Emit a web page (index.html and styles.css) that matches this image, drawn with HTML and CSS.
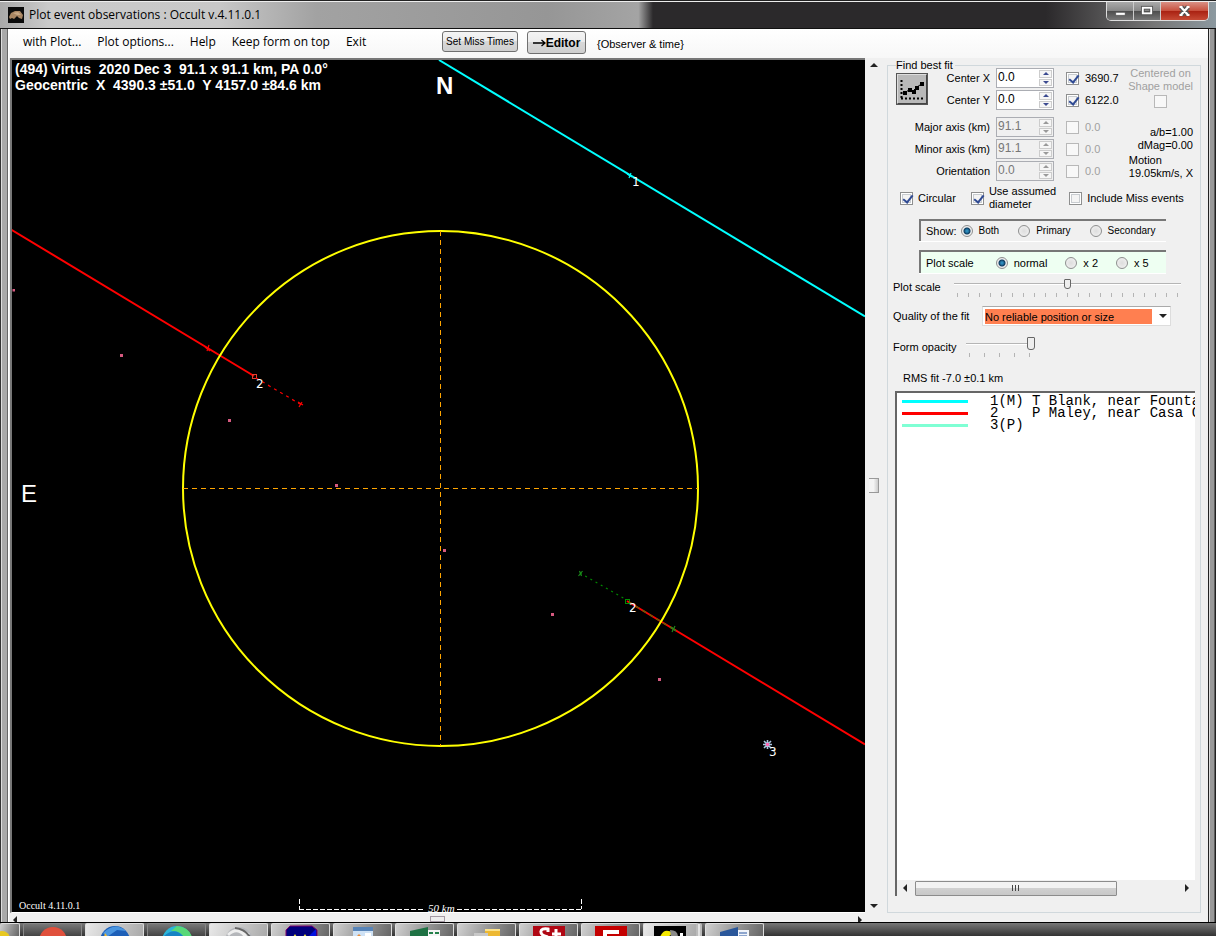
FILE: index.html
```html
<!DOCTYPE html>
<html lang="en">
<head>
<meta charset="utf-8">
<title>Plot event observations : Occult v.4.11.0.1</title>
<link rel="stylesheet" href="styles.css">
</head>
<body>
<div class="window">
  <header class="titlebar">
    <svg class="app-icon" viewBox="0 0 16 16" aria-hidden="true"><rect width="16" height="16" fill="#0c0c0c"/><path d="M1 10 3 6 7 4l5 0 3 4-1 4-3-1-2-2-3 3-2-1-2 1z" fill="#a98662"/><path d="M5 6l5-1 3 3-4 0z" fill="#c9a985"/></svg>
    <h1 class="title">Plot event observations : Occult v.4.11.0.1</h1>
    <div class="window-buttons">
      <button class="wb" aria-label="Minimize"><svg viewBox="0 0 28 18"><rect x="9.500" y="10.500" width="10" height="3" fill="#fff" stroke="#555"  stroke-width=".6"/></svg></button>
      <button class="wb" aria-label="Maximize"><svg viewBox="0 0 28 18"><rect x="9.500" y="5.500" width="9" height="6" fill="none" stroke="#555" stroke-width="4"/><rect x="9.500" y="5.500" width="9" height="6" fill="none" stroke="#fff" stroke-width="2"/></svg></button>
      <button class="wb close" aria-label="Close"><svg viewBox="0 0 46 18"><path d="M19.500 5l7 8m0-8-7 8" stroke="#555" stroke-width="5"/><path d="M19.500 5l7 8m0-8-7 8M18 5h3m4 0h3M18 13h3m4 0h3" stroke="#fff" stroke-width="2.200"/></svg></button>
    </div>
  </header>

  <div class="client">
    <nav class="menubar">
      <button class="menu">with Plot...</button>
      <button class="menu">Plot options...</button>
      <button class="menu">Help</button>
      <button class="menu">Keep form on top</button>
      <button class="menu">Exit</button>
      <button class="push small">Set Miss Times</button>
      <button class="push editor"><svg viewBox="0 0 13 8"><path d="M0 4h12M8.500 1 12 4 8.500 7" fill="none" stroke="#000" stroke-width="1.300"/></svg>Editor</button>
      <span class="hint">{Observer &amp; time}</span>
    </nav>

    <div class="workspace">
      <div class="plot-column">
        <div class="plot">
          <svg viewBox="12 60 853 852" preserveAspectRatio="xMinYMin meet">
            <g fill="none" stroke-width="2">
              <path d="M439 60 865 316.500" stroke="#0ff"/>
              <path d="M11 229.500 254 376M627 601 865 744.500" stroke="#f00"/>
              <circle cx="440.500" cy="488.500" r="257.500" stroke="#ff0"/>
            </g>
            <path class="crosshair" d="M183 488.500H698M440.500 231V746"/>
            <g fill="none" stroke-width="1" shape-rendering="crispEdges">
              <path d="M299.500 899v10M581.500 899v10M299 909.500H424M457 909.500H582" stroke="#fff" stroke-dasharray="5 2"/>
              <rect x="252.500" y="374.500" width="4" height="4" stroke="#e04030"/>
              <rect x="625.500" y="599.500" width="4" height="4" stroke="#009000"/>
            </g>
            <g fill="none" stroke-width="1.200">
              <path d="M256 378 300 404" stroke="#f00" stroke-dasharray="3 4"/>
              <path d="M298 402l5 3m-4 2 3-5M205 347l5 4m-3 0 2-6" stroke="#f00"/>
              <path d="M580 573 625 599" stroke="#080" stroke-dasharray="2 4"/>
              <path d="M629 602 673 629" stroke="#557000" stroke-dasharray="4 4"/>
              <path d="M578.500 576l4-5m-3 0 2 5M671 627l5 4m-4 1 3-6" stroke="#1b8c1b"/>
              <path d="M627 174l5 3m-3 1 2-5" stroke="#0ff"/>
              <path d="M764 741l7 7m0-7-7 7M767.500 740v9M763 744.500h9" stroke="#aac4e0" stroke-width="1.600"/>
            </g>
            <g fill="#d65a80">
              <rect x="12.500" y="289" width="2.500" height="2.500"/><rect x="120" y="354" width="3" height="3"/><rect x="228" y="419" width="3" height="3"/><rect x="335" y="484" width="3" height="3"/><rect x="443" y="549" width="3" height="3"/><rect x="551" y="613" width="3" height="3"/><rect x="658" y="678" width="3" height="3"/><rect x="766" y="743" width="3" height="3" fill="#ff69b4"/>
            </g>
            <g class="plot-head"><text x="15" y="74">(494) Virtus&nbsp; 2020 Dec 3&nbsp;&nbsp;91.1 x 91.1 km, PA 0.0°</text><text x="15" y="90">Geocentric&nbsp; X&nbsp; 4390.3 ±51.0&nbsp; Y 4157.0 ±84.6 km</text></g>
            <text class="compass" x="436" y="94">N</text>
            <text class="compass east" x="21" y="502">E</text>
            <g class="chord"><text x="632" y="186">1</text><text x="256" y="388">2</text><text x="629" y="612">2</text><text x="769" y="756">3</text></g>
            <text class="version" x="19" y="909">Occult 4.11.0.1</text>
            <text class="scale" x="428" y="912">50 km</text>
          </svg>
        </div>
        <div class="hscroll-outer"><i class="arrow left"></i><i class="h-thumb"></i><i class="arrow right"></i></div>
      </div>
      <div class="vscroll"><i class="arrow up"></i><i class="v-thumb"></i><i class="arrow down"></i></div>

      <fieldset class="panel">
        <legend>Find best fit</legend>
        <div class="fit">
          <button class="fit-button" aria-label="Find best fit"><svg viewBox="0 0 28 27"><path d="M3.500 4v19" stroke="#000" stroke-width="2" stroke-dasharray="2 2"/><path d="M3 22.500h22" stroke="#000" stroke-width="2" stroke-dasharray="2 2"/><path d="M6 17l5-3 4 1 4-4 6-4" fill="none" stroke="#000"/><path d="M5 15h4v4H5zM10 12h4v4h-4zM14 14h4v4h-4zM17 10h4v4h-4zM22 6h4v4h-4z"/></svg></button>
          <label for="cx">Center X</label>
          <span class="spin"><input id="cx" value="0.0"><span class="steps"><button aria-label="Increase Center X"></button><button class="dn" aria-label="Decrease Center X"></button></span></span>
          <input type="checkbox" id="fx" checked><label class="val" for="fx">3690.7</label>
          <label class="centered" for="shape">Centered on<br>Shape model<input type="checkbox" id="shape" disabled></label>
          <label for="cy">Center Y</label>
          <span class="spin"><input id="cy" value="0.0"><span class="steps"><button aria-label="Increase Center Y"></button><button class="dn" aria-label="Decrease Center Y"></button></span></span>
          <input type="checkbox" id="fy" checked><label class="val" for="fy">6122.0</label>
        </div>
        <div class="fit axes">
          <label class="wide" for="ma">Major axis (km)</label>
          <span class="spin"><input id="ma" value="91.1" disabled><span class="steps"><button disabled aria-label="Increase Major axis"></button><button class="dn" disabled aria-label="Decrease Major axis"></button></span></span>
          <input type="checkbox" id="fma" disabled><label class="val off" for="fma">0.0</label>
          <div class="motion"><p class="right">a/b=1.00<br>dMag=0.00</p><p>Motion<br>19.05km/s, X</p></div>
          <label class="wide" for="mi">Minor axis (km)</label>
          <span class="spin"><input id="mi" value="91.1" disabled><span class="steps"><button disabled aria-label="Increase Minor axis"></button><button class="dn" disabled aria-label="Decrease Minor axis"></button></span></span>
          <input type="checkbox" id="fmi" disabled><label class="val off" for="fmi">0.0</label>
          <label class="wide" for="or">Orientation</label>
          <span class="spin"><input id="or" value="0.0" disabled><span class="steps"><button disabled aria-label="Increase Orientation"></button><button class="dn" disabled aria-label="Decrease Orientation"></button></span></span>
          <input type="checkbox" id="for" disabled><label class="val off" for="for">0.0</label>
        </div>
        <div class="checks">
          <label><input type="checkbox" checked>Circular</label>
          <label class="assumed"><input type="checkbox" checked><span>Use assumed<br>diameter</span></label>
          <label><input type="checkbox">Include Miss events</label>
        </div>
        <div class="box show" role="radiogroup" aria-label="Show">
          <span>Show:</span>
          <label><input type="radio" name="show" checked>Both</label>
          <label><input type="radio" name="show">Primary</label>
          <label><input type="radio" name="show">Secondary</label>
        </div>
        <div class="box zoom" role="radiogroup" aria-label="Plot scale">
          <span>Plot scale</span>
          <label><input type="radio" name="zoom" checked>normal</label>
          <label><input type="radio" name="zoom">x 2</label>
          <label><input type="radio" name="zoom">x 5</label>
        </div>
        <div class="line scale-line"><label for="ps">Plot scale</label><span class="slider"><input type="range" id="ps" min="0" max="20" value="10"><i class="ticks"></i></span></div>
        <div class="line quality-line"><label for="q">Quality of the fit</label><span class="combo"><select id="q"><option>No reliable position or size</option></select><i class="arrow down"></i></span></div>
        <div class="line opacity-line"><label for="op">Form opacity</label><span class="slider"><input type="range" id="op" min="0" max="100" value="100"><i class="ticks"></i></span></div>
        <p class="rms">RMS fit -7.0 ±0.1 km</p>
        <div class="list">
          <ul class="rows">
            <li><i class="swatch cyan"></i>1(M) T Blank, near Founta</li>
            <li><i class="swatch red"></i>2&nbsp;&nbsp;&nbsp; P Maley, near Casa G</li>
            <li><i class="swatch aqua"></i>3(P)</li>
          </ul>
          <div class="hscroll"><i class="arrow left"></i><span class="track"><i class="thumb"></i></span><i class="arrow right"></i></div>
        </div>
      </fieldset>
    </div>
  </div>
</div>

<footer class="taskbar">
  <span class="task first"><svg viewBox="0 0 40 14"><circle cx="12" cy="16" r="8" fill="#e8c820"/></svg></span>
  <span class="task flat"><svg viewBox="0 0 40 14"><circle cx="20" cy="18" r="14" fill="#e0503c"/></svg></span>
  <span class="task lit"><svg viewBox="0 0 40 14"><circle cx="20" cy="18" r="15" fill="#1d5fb8"/><path d="M8 10Q20-2 31 8L22 7 12 14z" fill="#4b96e0"/><path d="M10 10l3 4H9z" fill="#f0b830"/></svg></span>
  <span class="task flat"><svg viewBox="0 0 40 14"><circle cx="20" cy="18" r="15" fill="#2bb5d8"/><path d="M20 3Q32 4 35 14H26Q24 8 14 8z" fill="#58d878"/><path d="M7 13Q18 3 27 14H7z" fill="#1683c4"/></svg></span>
  <span class="task lit"><svg viewBox="0 0 40 14"><circle cx="20" cy="18" r="14" fill="#b5b7bb"/><path d="M8 11Q18 1 31 11L25 14Q18 5 10 13z" fill="#eee"/><path d="M16 5q10 1 15 9" fill="none" stroke="#666" stroke-width="2"/></svg></span>
  <span class="task"><svg viewBox="0 0 40 14"><path d="M5 14V7l4-4h22l5 4v7z" fill="#00007c" stroke="#80006a"/><path d="M12 14l2-3 2 3m6 0 2-3 2 3" fill="#e8e030"/><path d="M27 14l8-8v8z" fill="#0010e0"/></svg></span>
  <span class="task"><svg viewBox="0 0 40 14"><path d="M10 4h20v10H10z" fill="#cfe2f5"/><path d="M10 4h20v4H10z" fill="#5784b8"/><path d="M13 14l3-3 3 3z" fill="#e68b38"/><path d="M22 10h6v4h-6z" fill="#fff"/></svg></span>
  <span class="task"><svg viewBox="0 0 40 14"><path d="M21 7h14v7H21z" fill="#f4f4f4"/><path d="M24 9h4v2h-4zm6 0h4v2h-4zm-6 4h4v1h-4zm6 0h4v1h-4z" fill="#23804a"/><path d="M5 8l18-4v10H5z" fill="#1f7244"/></svg></span>
  <span class="task"><svg viewBox="0 0 40 14"><path d="M18 6h15v8H18z" fill="#edb832"/><path d="M18 6h15v2H18z" fill="#fbe28c"/><path d="M7 10h14v4H7z" fill="#c8c8c8"/></svg></span>
  <span class="task"><svg viewBox="0 0 40 14"><path d="M4 3h32v11H4z" fill="#b00814"/><path d="M19 14c-10-2-9-10 0-8v3M27 6v8M23 11h9" fill="none" stroke="#fff" stroke-width="3"/></svg></span>
  <span class="task"><svg viewBox="0 0 40 14"><path d="M4 3h32v11H4z" fill="#c40000"/><path d="M14 14V9h14" fill="none" stroke="#fff" stroke-width="4"/></svg></span>
  <span class="task lit stack"><svg viewBox="0 0 40 14"><path d="M4 3h32v11H4z" fill="#000"/><path d="M10 14q4-10 13-4l-5 4z" fill="#f4e800"/><path d="M20 7q8 0 8 7h-7z" fill="#8a8a8a"/><path d="M30 10h3v4h-3z" fill="#fff"/></svg></span>
  <span class="task"><svg viewBox="0 0 40 14"><path d="M20 7h14v7H20z" fill="#f0f4fa"/><path d="M24 10h8m-8 3h8" stroke="#2a56a0"/><path d="M5 9l18-5v10H5z" fill="#2a579a"/></svg></span>
</footer>
</body>
</html>
```
FILE: styles.css
```css
* { box-sizing: border-box; }
body {
  margin: 0;
  height: 100vh;
  display: flex;
  flex-direction: column;
  overflow: hidden;
  font: 11px/14px "Liberation Sans", Arial, sans-serif;
  color: #000;
  background: #2b2b2b;
}
button, input, select { font: inherit; color: inherit; margin: 0; padding: 0; }
p, h1, ul { margin: 0; padding: 0; font-weight: normal; }
ul { list-style: none; }
svg { display: block; }

/* window frame */
.window {
  flex: 1;
  min-height: 0;
  display: flex;
  flex-direction: column;
  padding: 0 8px;
  border-top: 1px solid #222;
  background: linear-gradient(90deg, #333 0 1px, #ddd 1px 2px, #a9a9a9 2px 7px, #666 7px 8px, #a9a9a9 8px calc(100% - 8px), #222 calc(100% - 8px) calc(100% - 7px), #ddd calc(100% - 7px) calc(100% - 6px), #999 calc(100% - 6px) calc(100% - 2px), #222 calc(100% - 1px));
}
.titlebar {
  display: flex;
  height: 28px;
  margin: 0 -8px;
  padding: 0 7px 0 8px;
  border-top: 1px solid #eee;
  border-bottom: 1px solid #111;
  background: linear-gradient(90deg, #a9a9a9, #cacaca 4%, #c8c8c8 18%, #a2a2a2 26%, #969696 45%, #a4a4a4 52.5%, #2b292b 53.7%, #2b292b 86%, #777 95%, #8c99a0);
}
.app-icon { width: 16px; height: 16px; margin-top: 5px; }
.title { flex: 1; padding: 3px 0 0 5px; font: 12px/20px "Open Sans", sans-serif; }
.window-buttons {
  display: flex;
  height: 19px;
  border: 1px solid #ddd;
  border-top: 0;
  border-radius: 0 0 5px 5px;
  overflow: hidden;
}
.wb { width: 27px; border: 0; border-right: 1px solid #ccc; background: linear-gradient(#aaa, #888 48%, #4d4d4d 50%, #777); }
.wb svg { height: 18px; width: 100%; }
.wb.close { width: 47px; border-right: 0; background: linear-gradient(#d99084, #c8513e 48%, #a92111 50%, #c64a35); }

/* client area */
.client { flex: 1; min-height: 0; display: flex; flex-direction: column; background: #f0f0f0; border-left: 1px solid #fff; }
.menubar { display: flex; align-items: flex-start; height: 29px; padding-left: 14px; background: linear-gradient(#fff, #f7f7f7); }
.menu { margin-right: 16px; border: 0; background: none; font: 12px/26px "Open Sans", sans-serif; white-space: nowrap; }
.push { border: 1px solid #707070; border-radius: 3px; background: linear-gradient(#f4f4f4, #ebebeb 50%, #d8d8d8 50%, #cfcfcf); white-space: nowrap; }
.push.small { width: 76px; height: 21px; margin: 2px 9px 0 auto; font-size: 10px; }
.push.editor { display: flex; align-items: center; justify-content: center; width: 59px; height: 23px; margin-top: 2px; font-weight: bold; font-size: 12px; }
.push.editor svg { width: 13px; height: 8px; }
.hint { flex: 0 0 622px; padding: 8px 0 0 11px; }

.workspace { flex: 1; min-height: 0; display: flex; }
.plot-column { flex: 1; min-width: 0; display: flex; flex-direction: column; padding-left: 1px; }
.plot { flex: 1; min-height: 0; background: #000; border: solid #777; border-width: 2px 0 0 2px; border-bottom: 1px solid #fff; }
.plot svg { width: 100%; height: 100%; }
.plot text { fill: #fff; }
.crosshair { fill: none; stroke: #ffa500; stroke-width: 1px; stroke-dasharray: 5 4; }
.plot-head { font-weight: bold; font-size: 14px; }
.compass { font-weight: bold; font-size: 24px; }
.compass.east { font-weight: normal; }
.chord { font: 12px "DejaVu Sans", sans-serif; }
.version { font: 10px "Liberation Serif", serif; }
.scale { font: italic 11px "Liberation Serif", serif; }

.arrow { width: 0; height: 0; border: 4px solid transparent; }
.arrow.up { border-bottom-color: #222; border-top: 0; }
.arrow.down { border-top-color: #222; border-bottom: 0; }
.arrow.left { border-right-color: #222; border-left: 0; }
.arrow.right { border-left-color: #222; border-right: 0; }
.hscroll-outer { display: flex; justify-content: space-between; height: 9px; padding: 3px 3px 0; overflow: hidden; }
.h-thumb { width: 15px; height: 6px; border: 1px solid #a59aa5; background: #eee; }
.vscroll { display: flex; flex-direction: column; justify-content: space-between; align-items: center; width: 17px; padding: 5px 0 14px; }
.v-thumb { width: 10px; height: 15px; border: 1px solid #999; border-left: 0; background: linear-gradient(90deg, #f4f4f4 50%, #ccc); }

/* fit panel */
.panel {
  display: flex;
  flex-direction: column;
  flex: 0 0 314px;
  min-width: 0;
  margin: 0 7px 9px 5px;
  padding: 0 5px 16px 8px;
  border: 1px solid #d0d8dc;
}
.panel legend { padding: 0 2px 0 0; }
.fit { display: grid; grid-template-columns: 32px 62px 76px 13px 46px 1fr; grid-auto-rows: 22px; align-items: center; justify-items: end; margin-top: -5px; }
.axes { margin-top: 5px; }
.fit label { white-space: nowrap; }
.fit .wide { grid-column: 1 / 3; }
.fit .spin { justify-self: start; margin-left: 6px; }
.fit .val { justify-self: start; padding-left: 6px; }
.fit .val.off { color: #a0a0a0; }
.fit-button { grid-row: 1 / 3; align-self: center; width: 32px; height: 32px; border: 2px solid; border-color: #ddd #444 #444 #ddd; outline: 1px solid #555; outline-offset: -1px; background: #b9b9b9; }
.fit-button svg { width: 28px; height: 27px; }
.spin { display: flex; width: 58px; height: 20px; border: 1px solid #abadb3; background: #fff; }
.spin input { flex: 1; min-width: 0; border: 0; background: none; padding: 0 1px 2px; font-size: 12px; }
.spin input:disabled { color: #777; }
.spin:has(input:disabled) { background: #f0f0f0; }
.steps { display: flex; flex-direction: column; width: 15px; padding: 1px; gap: 1px; }
.steps button { flex: 1; display: flex; align-items: center; justify-content: center; border: 1px solid #ccc; background: #f6f6f6; }
.steps button::before { content: ""; border: 3px solid transparent; border-top: 0; border-bottom-color: #3b4a90; }
.steps .dn::before { border-top: 3px solid #3b4a90; border-bottom: 0; }
.steps button:disabled::before { border-bottom-color: #999; }
.steps .dn:disabled::before { border-top-color: #999; }
.centered { grid-column: 6; grid-row: 1 / 3; align-self: start; justify-self: end; padding-right: 2px; color: #a0a0a0; text-align: center; line-height: 13px; }
.centered input { display: block; margin: 2px auto 0; }
.motion { grid-column: 6; grid-row: 1 / 4; justify-self: end; line-height: 13px; padding: 8px 2px 0 0; }
.motion p + p { margin-top: 2px; }
.motion .right { text-align: right; }

input[type="checkbox"] { appearance: none; flex: none; width: 13px; height: 13px; border: 1px solid #8e8f8f; background: #f4f4f4; box-shadow: inset 0 0 0 1px #fff, inset 0 0 0 2px #c8ccd0; }
input[type="checkbox"]:disabled { border-color: #b8b8b8; background: #f8f8f8; box-shadow: none; }
input[type="checkbox"]:checked::before { content: ""; display: block; width: 4px; height: 8px; margin: 0 0 0 4px; border: solid #2f4a93; border-width: 0 2px 2px 0; transform: rotate(38deg); }
input[type="radio"] { appearance: none; flex: none; width: 12px; height: 12px; border: 1px solid #8e8f8f; border-radius: 50%; background: radial-gradient(#ddd, #f4f4f4); }
input[type="radio"]:checked { background: radial-gradient(circle, #2d8cbc 0 1px, #0d3c60 3px, #eee 4px); }

.checks { display: flex; align-items: center; height: 32px; padding-left: 4px; white-space: nowrap; }
.checks label { display: flex; align-items: center; gap: 5px; }
.checks .assumed { margin: 0 13px 0 15px; line-height: 13px; }
.box { display: flex; align-items: center; flex: none; margin: 5px 29px 0 23px; padding-left: 5px; height: 22px; border: solid #777; border-width: 2px 0 0 2px; box-shadow: 0 1px #fff; white-space: nowrap; }
.box + .box { margin-top: 9px; height: 23px; }
.box label { display: flex; align-items: center; gap: 6px; }
.show label { font-size: 10px; margin-right: 19px; }
.show span { margin-right: 4px; }
.zoom { background: #eefff2; }
.zoom span { margin-right: 22px; }
.zoom label { margin-right: 18px; }
.line { display: flex; align-items: center; flex: none; height: 28px; margin-left: -3px; white-space: nowrap; }
.scale-line .slider { width: 227px; margin-left: auto; margin-right: 14px; }
.quality-line { height: 30px; }
.combo { position: relative; width: 189px; height: 20px; margin: 0 24px 0 auto; padding: 2px; border: 1px solid #ddd; border-top-color: #aaa; background: #fff; }
.combo select { appearance: none; display: block; width: 100%; height: 15px; border: 0; border-right: 16px solid #fff; border-radius: 0; background: #ff7f50; }
.combo .arrow { position: absolute; right: 3px; top: 7px; }
.opacity-line { height: 32px; }
.opacity-line .slider { width: 69px; margin-left: 9px; }
.slider { display: block; }
.slider input { appearance: none; display: block; width: 100%; height: 14px; background: none; }
.slider input::-webkit-slider-runnable-track { height: 2px; background: #b5b5b5; border-bottom: 1px solid #fff; }
.slider input::-webkit-slider-thumb { appearance: none; width: 7px; height: 10px; margin-top: -4px; border: 1px solid #666; border-radius: 1px 1px 3px 3px; background: #eee; }
.opacity-line input::-webkit-slider-thumb { width: 8px; height: 13px; margin-top: -6px; }
.ticks { display: block; height: 4px; margin: 2px 1px 0 3px; background: repeating-linear-gradient(90deg, #b4b4b4 0 1px, transparent 1px 11px); }
.opacity-line .ticks { background: repeating-linear-gradient(90deg, #b4b4b4 0 1px, transparent 1px 15px); }
.rms { padding: 8px 0 0 7px; height: 28px; flex: none; }
.list { flex: 1; min-height: 0; display: flex; flex-direction: column; margin-left: -1px; border: solid #666; border-width: 2px 0 0 2px; background: #fff; }
.rows { flex: 1; padding: 2px 0 0 5px; overflow: hidden; font: 14px/12px "Liberation Mono", monospace; white-space: nowrap; }
.rows li { display: flex; align-items: center; }
.swatch { flex: none; width: 66px; height: 3px; margin-right: 22px; }
.cyan { background: #0ff; }
.red { background: #f00; }
.aqua { background: #7fffd4; }
.hscroll { display: flex; align-items: center; gap: 8px; height: 16px; padding: 0 6px; background: #f0f0f0; }
.track { flex: 1; }
.thumb { display: block; width: 77%; height: 15px; border: 1px solid #8c8c8c; border-radius: 1px; background: linear-gradient(90deg, #444 0 1px, transparent 1px 3px, #444 3px 4px, transparent 4px 6px, #444 6px 7px, transparent 7px) center / 8px 6px no-repeat, linear-gradient(#f2f2f2 45%, #d0d0d0 50%, #c8c8c8); }

/* taskbar */
.taskbar { display: flex; gap: 3px; flex: none; height: 14px; border-top: 1px solid #000; overflow: hidden; background: linear-gradient(#777, #333); }
.task { flex: 0 0 59px; min-width: 0; display: flex; justify-content: center; border: 1px solid #ddd; border-bottom: 0; border-radius: 2px 2px 0 0; background: linear-gradient(110deg, #d0d0d0, #999 50%, #666); }
.task svg { flex: none; width: 40px; height: 14px; margin-top: -1px; }
.task.first { flex-basis: 20px; border-left: 0; overflow: hidden; }
.task.flat { background: linear-gradient(#777, #444); border-color: #888; }
.task.lit { background: linear-gradient(110deg, #e8e8e8, #aaa); }
.task.stack { border-right: 6px double #bbb; }
```
